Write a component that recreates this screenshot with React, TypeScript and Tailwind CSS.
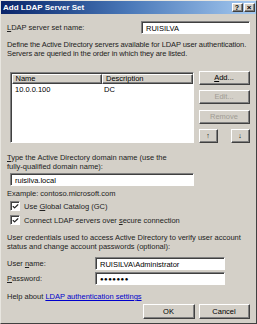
import { Check } from 'lucide-react';

function Btn({ children, disabled, className = '' }: { children: React.ReactNode; disabled?: boolean; className?: string }) {
  return (
    <div className={`border border-t-white border-l-white border-r-[#404040] border-b-[#404040] bg-[#d4d0c8] ${className}`}>
      <div className="w-full h-full border-r border-b border-[#808080] flex items-center justify-center">
        <span className={disabled ? 'text-[#a09c94]' : 'text-black'}>{children}</span>
      </div>
    </div>
  );
}

function Field({ value, className = '' }: { value: string; className?: string }) {
  return (
    <div className={`border border-t-[#808080] border-l-[#808080] border-r-white border-b-white ${className}`}>
      <div className="w-full h-full bg-white border-t border-l border-[#404040] flex items-center px-[3px] text-black">
        {value}
      </div>
    </div>
  );
}

function Box() {
  return (
    <div className="w-[10px] h-[10px] border border-t-[#808080] border-l-[#808080] border-r-white border-b-white shrink-0">
      <div className="w-full h-full bg-white border-t border-l border-[#404040] flex items-center justify-center">
        <Check className="w-[7px] h-[7px]" strokeWidth={4} />
      </div>
    </div>
  );
}

export default function App() {
  return (
    <div
      className="w-[257px] h-[324px] bg-[#d4d0c8] border border-t-[#e8e6e0] border-l-[#e8e6e0] border-r-[#404040] border-b-[#404040] overflow-hidden text-[7.5px] leading-[9px] text-[#222]"
      style={{ fontFamily: '"Liberation Sans", Arial, sans-serif' }}
    >
      {/* title bar */}
      <div className="h-[13px] bg-gradient-to-r from-[#0a246a] via-[#4a78b8] to-[#a6caf0] flex items-center justify-between pl-[2px] pr-[1px]">
        <span className="text-white font-bold text-[8px]">Add LDAP Server Set</span>
        <div className="flex gap-[1px]">
          <Btn className="w-[11px] h-[9px] text-[7px] font-bold">?</Btn>
          <Btn className="w-[11px] h-[9px] text-[8px] font-bold">×</Btn>
        </div>
      </div>

      <div className="flex flex-col pl-[6px] pr-[6px]">
        <div className="flex items-center justify-between mt-[7px]">
          <span><u>L</u>DAP server set name:</span>
          <Field value="RUISILVA" className="w-[109px] h-[13px]" />
        </div>

        <p className="mt-[6px] whitespace-nowrap tracking-[-0.1px]">
          Define the Active Directory servers available for LDAP user authentication.
          <br />
          Servers are queried in the order in which they are listed.
        </p>

        <div className="flex justify-between mt-[14px] pl-[3px]">
          <div className="w-[184px] h-[71px] border border-t-[#808080] border-l-[#808080] border-r-white border-b-white">
            <div className="w-full h-full bg-white border-t border-l border-[#404040]">
              <div className="flex h-[10px]">
                <Btn className="w-[90px] h-[10px]">
                  <span className="block w-[86px] pl-[2px]">Name</span>
                </Btn>
                <Btn className="flex-1 h-[10px]">
                  <span className="block w-[86px] pl-[2px]">Description</span>
                </Btn>
              </div>
              <div className="flex mt-[1px]">
                <span className="w-[90px] pl-[3px] text-black">10.0.0.100</span>
                <span className="pl-[2px] text-black">DC</span>
              </div>
            </div>
          </div>
          <div className="flex flex-col justify-between w-[51px] -mt-[1px]">
            <Btn className="h-[14px]"><u>A</u>dd...</Btn>
            <Btn className="h-[14px]" disabled>Edit...</Btn>
            <Btn className="h-[14px]" disabled>Remove</Btn>
            <div className="flex justify-between">
              <Btn className="w-[19px] h-[14px] text-[7px]">↑</Btn>
              <Btn className="w-[19px] h-[14px] text-[7px]">↓</Btn>
            </div>
          </div>
        </div>

        <p className="mt-[10px] whitespace-nowrap">
          <u>T</u>ype the Active Directory domain name (use the
          <br />
          fully-qualified domain name):
        </p>
        <Field value="ruisilva.local" className="ml-[3px] mt-[2px] w-[184px] h-[13px]" />
        <p className="mt-[3px]">Example: contoso.microsoft.com</p>

        <div className="flex items-center gap-[4px] mt-[3px] ml-[3px] h-[10px]">
          <Box />
          <span>Use <u>G</u>lobal Catalog (GC)</span>
        </div>
        <div className="flex items-center gap-[4px] mt-[4px] ml-[3px] h-[10px]">
          <Box />
          <span>Connect LDAP servers over <u>s</u>ecure connection</span>
        </div>

        <p className="mt-[8px] whitespace-nowrap">
          User credentials used to access Active Directory to verify user account
          <br />
          status and change account passwords (optional):
        </p>

        <div className="flex items-center mt-[6px]">
          <span className="w-[88px]">User <u>n</u>ame:</span>
          <Field value="RUISILVA\Administrator" className="w-[130px] h-[13px]" />
        </div>
        <div className="flex items-center mt-[2px]">
          <span className="w-[88px]"><u>P</u>assword:</span>
          <Field value="●●●●●●●" className="w-[130px] h-[13px] text-[6px] tracking-[0.5px]" />
        </div>

        <p className="mt-[7px]">
          Help about <span className="text-[#0000cc] underline">LDAP authentication settings</span>
        </p>

        <div className="flex justify-end gap-[4px] mt-[3px]">
          <Btn className="w-[52px] h-[15px]">OK</Btn>
          <Btn className="w-[51px] h-[15px]">Cancel</Btn>
        </div>
      </div>
    </div>
  );
}
